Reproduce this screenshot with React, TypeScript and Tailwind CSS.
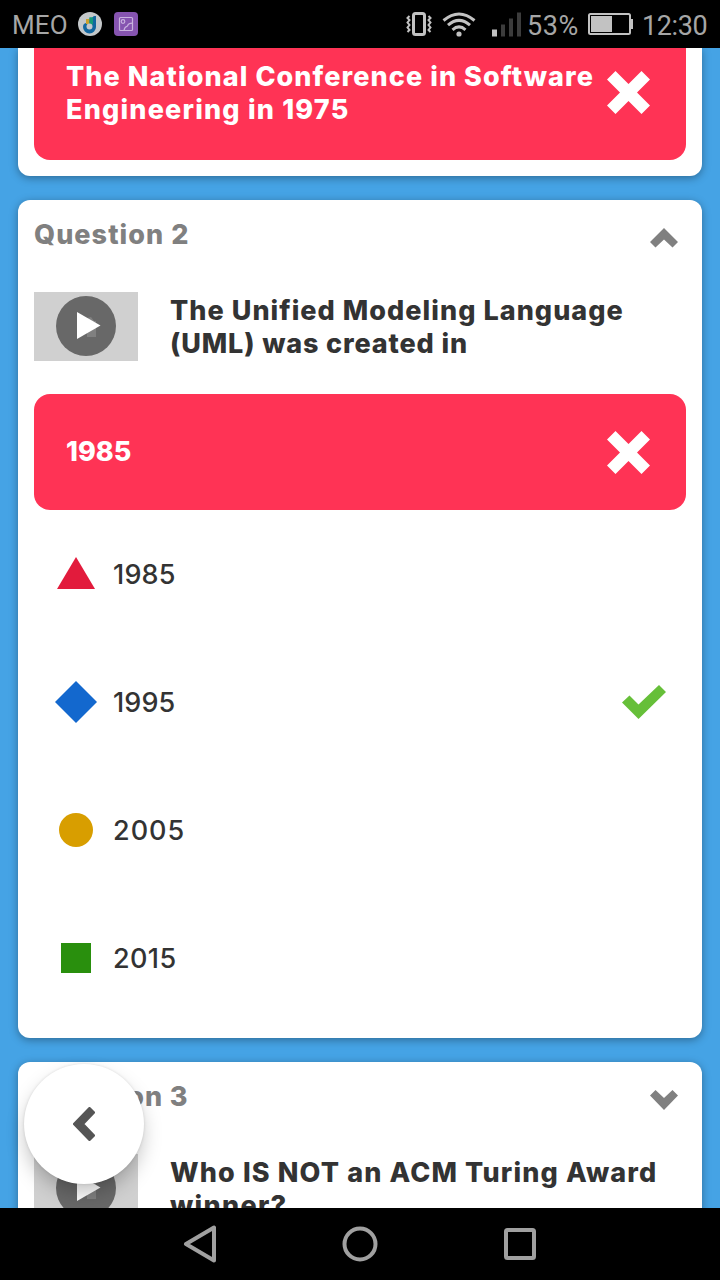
import type { ReactNode } from "react";

function StatusBar() {
  return (
    <header className="flex h-12 shrink-0 items-center bg-black pl-3 font-['Roboto',sans-serif] text-[27px] leading-8 text-[#a6a6a6]">
      <span className="w-[66px] whitespace-nowrap pt-0.5 text-[26px] tracking-[0.1px]">MEO</span>
      <svg className="h-6 w-6 shrink-0" viewBox="0 0 24 24">
        <circle cx="12" cy="12" r="12" fill="#c4c8ca" />
        <path d="M8 7h4v6H8z" fill="#c9a12e" />
        <path d="M11.500 5.500h4v7h-4z" fill="#159a78" />
        <path d="M15 5q0-1.500 3-1v11a6.500 6.500 0 0 1-13 0q0-3.500 3-4z" fill="#1267a0" />
        <path d="M8 7h3.500v5H8z" fill="#c9a12e" />
        <path d="M11.500 5.500H15v7h-3.500z" fill="#159a78" />
        <circle cx="11.500" cy="14.500" r="3" fill="#c4c8ca" />
      </svg>
      <svg className="ml-3 h-6 w-6 shrink-0" viewBox="0 0 24 24" fill="none" stroke="#c9b2df" strokeWidth="1.2">
        <rect width="24" height="24" rx="4" fill="#8654b0" stroke="none" />
        <rect x="5.5" y="5.5" width="13" height="13" rx="1" />
        <circle cx="9" cy="9.500" r="1.8" />
        <path d="M10 18.500c.3-3 1.500-3.800 3.500-4.500 .6-2 2-2.800 5-2.800" />
      </svg>
      <svg className="ml-[268px] h-6 w-[26px] shrink-0" viewBox="0 0 26 24" fill="none" stroke="#c2c2c2">
        <rect x="7.500" y="1.500" width="11" height="21" rx="2" strokeWidth="3" />
        <path d="M3.500 4L1.500 6 3.500 8 1.500 10.500 3.500 13 1.500 15.500 3.500 18 1.500 20M22.500 4l2 2-2 2 2 2.500-2 2.500 2 2.500-2 2.500 2 2" strokeWidth="2" />
      </svg>
      <svg className="ml-2.5 h-[25px] w-[34px] shrink-0" viewBox="0 0 34 25" fill="none" stroke="#c2c2c2" strokeWidth="3">
        <path d="M1.500 8.500Q17-4.500 32.500 8.500M6 13.200Q17 3.500 28 13.200M10.500 17.800Q17 12 23.500 17.800" />
        <circle cx="17" cy="22" r="2.600" fill="#c2c2c2" stroke="none" />
      </svg>
      <svg className="ml-4 h-[25px] w-[29px] shrink-0" viewBox="0 0 29 25" fill="#3c3c3c">
        <path d="M0 17.500h5v7H0z" fill="#c2c2c2" />
        <path d="M9 12.500h4v12H9zM17 6.500h4v18h-4zM25 .5h4v24h-4z" />
      </svg>
      <span className="ml-[6px] w-[54px] whitespace-nowrap pt-[3px] tracking-[0.6px]">53%</span>
      <svg className="ml-[7px] h-[22px] w-[45px] shrink-0" viewBox="0 0 45 22">
        <rect x="1" y="1" width="41" height="20" rx="1.500" fill="none" stroke="#c2c2c2" strokeWidth="2" />
        <path d="M3 3h21v16H3zM43 6h2v10h-2z" fill="#c2c2c2" />
      </svg>
      <span className="ml-[9px] whitespace-nowrap pt-[3px] tracking-[-0.4px]">12:30</span>
    </header>
  );
}

function CrossIcon() {
  return (
    <svg className="-ml-px h-[43px] w-[43px] shrink-0" viewBox="0 0 43 43" fill="#fff">
      <path d="M8.500 0 21.500 13 34.500 0 43 8.500 30 21.500 43 34.500 34.500 43 21.500 30 8.500 43 0 34.500 13 21.500 0 8.500z" />
    </svg>
  );
}

function Chevron({ up = false }: { up?: boolean }) {
  return (
    <svg className="h-5 w-7" viewBox="0 0 28 20" fill="#808080">
      {up ? (
        <path d="M14 0 28 14 22.500 19.500 14 11.500 5.500 19.500 0 14z" />
      ) : (
        <path d="M14 20 28 5.500 22.500 0 14 8 5.500 0 0 5.500z" />
      )}
    </svg>
  );
}

function Thumbnail() {
  return (
    <div className="flex h-[69px] w-[104px] shrink-0 justify-center bg-[#d0d0d0] pt-1">
      <svg className="h-[60px] w-[60px]" viewBox="0 0 60 60">
        <circle cx="30" cy="30" r="30" fill="#686868" />
        <path d="M31 22l4-1 3 4h2v16H31z" fill="#808080" />
        <path d="M21 16 44.500 29.500 21 43z" fill="#fff" />
      </svg>
    </div>
  );
}

function Card({ className, children }: { className?: string; children: ReactNode }) {
  return (
    <section className={`mx-[18px] shrink-0 bg-white px-4 shadow-[0_2px_8px_rgba(0,0,0,0.35)] ${className ?? ""}`}>
      {children}
    </section>
  );
}

function CardHeader({ title, up }: { title: ReactNode; up?: boolean }) {
  return (
    <div className="flex h-[92px] items-start justify-between pr-2 pt-[18px] text-[#808080]">
      <h2 className="whitespace-nowrap text-[27px] font-extrabold leading-[33px]">{title}</h2>
      <div className="pt-[10px]">
        <Chevron up={up} />
      </div>
    </div>
  );
}

const shapes = {
  triangle: <path d="M21 4 40 36H2z" fill="#e21b3c" />,
  diamond: <path d="M21 0 42 21 21 42 0 21z" fill="#1368ce" />,
  circle: <circle cx="21" cy="21" r="17" fill="#d89e00" />,
  square: <path d="M6 6h30v30H6z" fill="#298f0d" />,
};

const answers: { shape: keyof typeof shapes; text: string; tracking: string; correct?: boolean }[] = [
  { shape: "triangle", text: "1985", tracking: "tracking-[0.2px]" },
  { shape: "diamond", text: "1995", tracking: "tracking-[0.1px]", correct: true },
  { shape: "circle", text: "2005", tracking: "tracking-[1px]" },
  { shape: "square", text: "2015", tracking: "tracking-[0.4px]" },
];

export default function App() {
  return (
    <div className="flex h-[1280px] w-[720px] flex-col overflow-hidden bg-[#45a3e5] font-['Inter',sans-serif]">
      <StatusBar />
      <main className="relative flex h-[1160px] shrink-0 flex-col gap-6 overflow-hidden">
        <Card className="h-32 rounded-b-xl">
          <div className="flex h-28 justify-between rounded-b-2xl bg-[#ff3355] pl-8 pr-9 text-white">
            <p className="whitespace-nowrap pt-3 text-[27px] font-extrabold leading-[33px]">
              <span className="block tracking-[1.08px]">The National Conference in Software</span>
              <span className="block tracking-[1.2px]">Engineering in 1975</span>
            </p>
            <div className="pt-[23px]">
              <CrossIcon />
            </div>
          </div>
        </Card>

        <Card className="h-[838px] rounded-xl">
          <CardHeader title={<span className="tracking-[1.05px]">Question 2</span>} up />
          <div className="flex h-[102px] gap-8">
            <Thumbnail />
            <p className="whitespace-nowrap pt-0.5 text-[27px] font-extrabold leading-[33px] text-[#333]">
              <span className="block tracking-[1.04px]">The Unified Modeling Language</span>
              <span className="block tracking-[0.87px]">(UML) was created in</span>
            </p>
          </div>
          <div className="flex h-[116px] items-center justify-between rounded-2xl bg-[#ff3355] pl-8 pr-9 text-[27px] font-extrabold text-white">
            <span>1985</span>
            <CrossIcon />
          </div>
          <ul>
            {answers.map((answer) => (
              <li key={answer.text} className="flex h-32 items-center pl-[21px] pr-5 text-[27px] font-medium text-[#333]">
                <svg className="h-[42px] w-[42px]" viewBox="0 0 42 42">
                  {shapes[answer.shape]}
                </svg>
                <span className={`ml-4 grow pt-0.5 ${answer.tracking}`}>{answer.text}</span>
                {answer.correct && (
                  <svg className="h-[34px] w-11" viewBox="0 0 44 34" fill="#66bf39">
                    <path d="M0 17.500 7.500 10.500 16.500 19.500 37 0 44 7 16.500 34z" />
                  </svg>
                )}
              </li>
            ))}
          </ul>
        </Card>

        <Card className="h-[400px] rounded-xl">
          <CardHeader title={<span className="tracking-[0.9px]">Question 3</span>} />
          <div className="flex gap-8">
            <Thumbnail />
            <p className="whitespace-nowrap pt-0.5 text-[27px] font-extrabold leading-[33px] text-[#333]">
              <span className="block tracking-[1.14px]">Who IS NOT an ACM Turing Award</span>
              <span className="block tracking-[1.3px]">winner?</span>
            </p>
          </div>
        </Card>

        <button
          aria-label="Back"
          className="absolute left-6 top-[1016px] flex h-[120px] w-[120px] items-center justify-center rounded-full bg-white shadow-[0_10px_20px_-2px_rgba(0,0,0,0.25),0_0_3px_rgba(0,0,0,0.12)]"
        >
          <svg className="h-[34px] w-[22px]" viewBox="0 0 22 34" fill="#555" stroke="#555" strokeWidth="3" strokeLinejoin="round">
            <path d="M16.500 1.500 1.500 17 16.500 32.500 20.500 28.500 9.500 17 20.500 5.500z" />
          </svg>
        </button>
      </main>

      <nav className="flex h-[72px] shrink-0 items-center bg-black pl-[183px]">
        <svg className="h-[38px] w-[34px]" viewBox="0 0 34 38" fill="none" stroke="#a0a0a0" strokeWidth="4" strokeLinejoin="round">
          <path d="M31 2.500v33L3 19z" />
        </svg>
        <svg className="ml-[125px] h-9 w-9" viewBox="0 0 36 36" fill="none" stroke="#a0a0a0" strokeWidth="4">
          <circle cx="18" cy="18" r="15.500" />
        </svg>
        <svg className="ml-[126px] h-8 w-8" viewBox="0 0 32 32" fill="none" stroke="#a0a0a0" strokeWidth="4">
          <rect x="2" y="2" width="28" height="28" rx="1.500" />
        </svg>
      </nav>
    </div>
  );
}
